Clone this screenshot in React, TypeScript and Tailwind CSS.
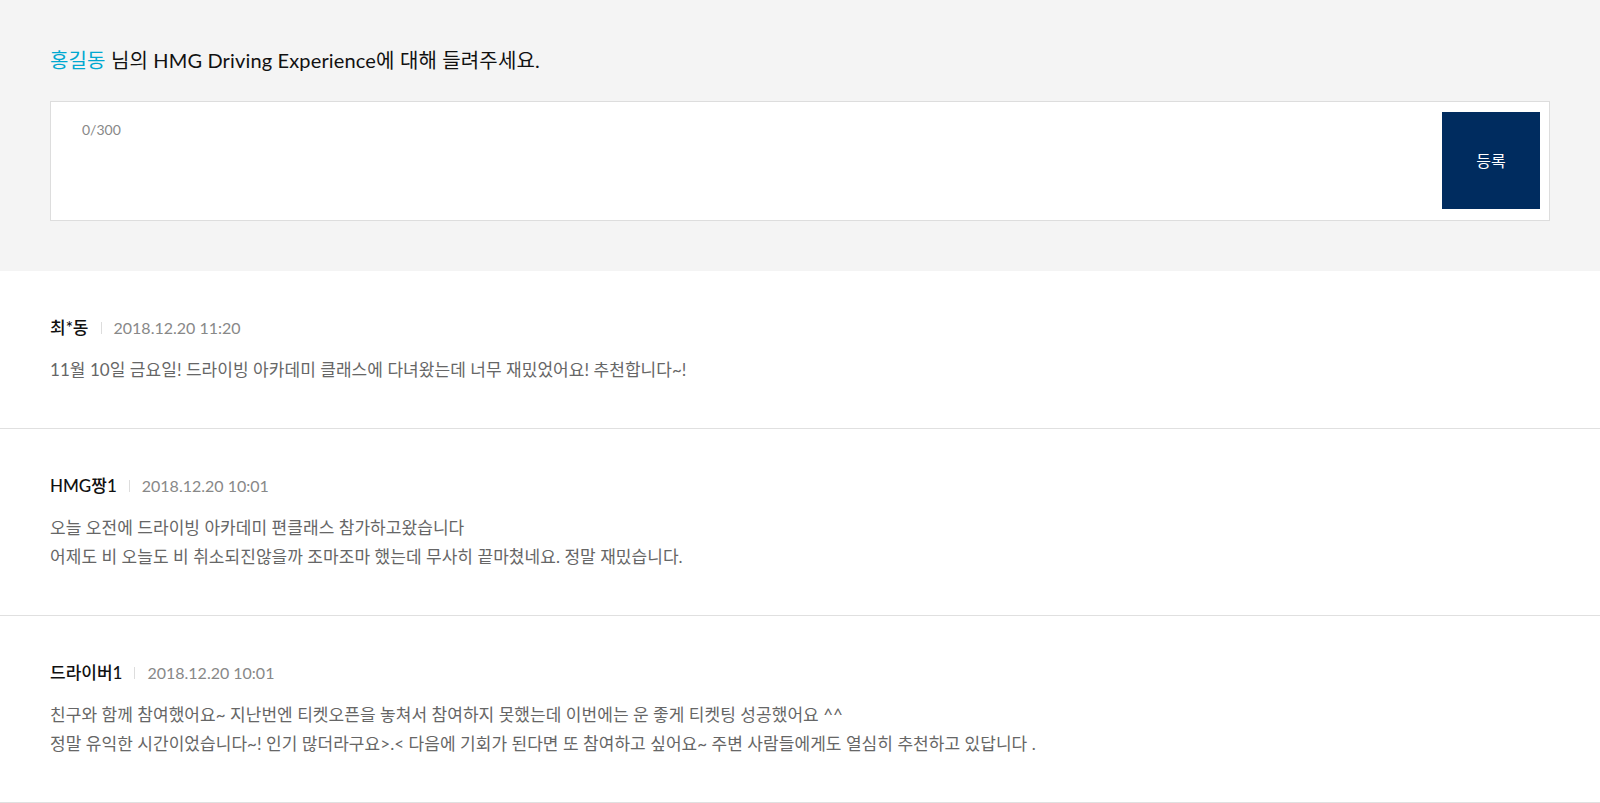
import React from "react";

const comments = [
  {
    name: "최*동",
    date: "2018.12.20 11:20",
    lines: ["11월 10일 금요일! 드라이빙 아카데미 클래스에 다녀왔는데 너무 재밌었어요! 추천합니다~!"],
  },
  {
    name: "HMG짱1",
    date: "2018.12.20 10:01",
    lines: [
      "오늘 오전에 드라이빙 아카데미 편클래스 참가하고왔습니다",
      "어제도 비 오늘도 비 취소되진않을까 조마조마 했는데 무사히 끝마쳤네요. 정말 재밌습니다.",
    ],
  },
  {
    name: "드라이버1",
    date: "2018.12.20 10:01",
    lines: [
      "친구와 함께 참여했어요~ 지난번엔 티켓오픈을 놓쳐서 참여하지 못했는데 이번에는 운 좋게 티켓팅 성공했어요 ^^",
      "정말 유익한 시간이었습니다~! 인기 많더라구요>.< 다음에 기회가 된다면 또 참여하고 싶어요~ 주변 사람들에게도 열심히 추천하고 있답니다 .",
    ],
  },
];

export default function App() {
  return (
    <div className="w-full bg-white font-['Lato','Noto_Sans_CJK_KR',sans-serif]">
      <section className="bg-[#f4f4f4] px-[50px] pt-[45px] pb-[50px]">
        <h2 className="h-[30px] text-[20px] leading-[30px] tracking-[0.15px] text-[#111]">
          <span className="text-[#00a8d0]">홍길동</span> 님의 HMG Driving Experience에 대해 들려주세요.
        </h2>
        <div className="mt-[26px] flex h-[120px] border border-[#dddddd] bg-white">
          <div className="flex-1 pl-[31px] pt-[18px] text-[14px] leading-[20px] text-[#888888]">0/300</div>
          <button className="mr-[9px] mt-[10px] flex h-[97px] w-[98px] items-center justify-center bg-[#002c5f] text-[16px] text-white">
            등록
          </button>
        </div>
      </section>
      <ul>
        {comments.map((c, i) => (
          <li key={i} className="border-b border-[#e0e0e0] px-[50px] pt-[45px] pb-[44px]">
            <div className="flex h-[24px] items-center overflow-hidden text-[16px] leading-[24px]">
              <span className="text-[17px] font-medium text-[#111]">{c.name}</span>
              <span className="mx-[12px] h-[12px] w-px bg-[#dddddd]" />
              <span className="text-[#888888]">{c.date}</span>
            </div>
            <div className="mt-[15px] text-[17px] leading-[29px] tracking-[0.05px] text-[#666666]">
              {c.lines.map((l, j) => (
                <p key={j}>{l}</p>
              ))}
            </div>
          </li>
        ))}
      </ul>
    </div>
  );
}
